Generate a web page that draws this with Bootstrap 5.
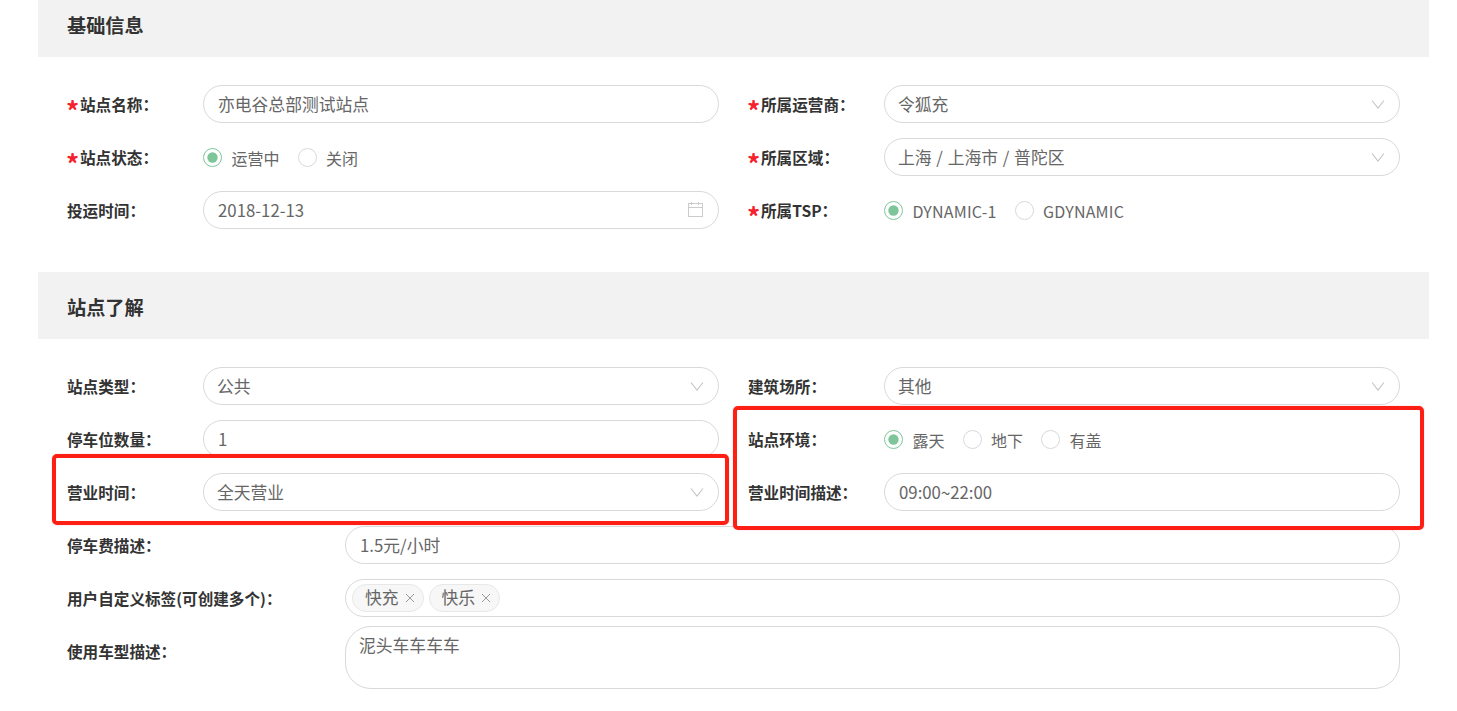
<!DOCTYPE html>
<html lang="zh-CN">
<head>
    <meta charset="UTF-8">
    <meta name="viewport" content="width=device-width, initial-scale=1.0">
    <title>站点信息</title>
    <link href="https://cdn.jsdelivr.net/npm/bootstrap@5.3.3/dist/css/bootstrap.min.css" rel="stylesheet">
    <style>
        html, body { height: 100%; overflow: hidden; }
        body { font-family: "Noto Sans CJK SC", "Liberation Sans", sans-serif; color: #333; background: #fff; }
        .site-page { position: relative; margin: -10px 28px 0 38px; height: 721px; }
        .section-head { height: 67px; line-height: 71px; padding-left: 29px; background: #f2f2f2; font-size: 19.2px; font-weight: 700; color: #333; }
        .section-body { padding: 28px 29px 43px; }
        .section-body.last { padding-bottom: 0; }
        .field-rows { --bs-gutter-x: 29px; --bs-gutter-y: 15px; }
        .field-name { flex: 0 0 136px; width: 136px; margin: 0; padding-top: 2px; font-size: 15.6px; font-weight: 700; color: #333; white-space: nowrap; }
        .field-name.wide { flex-basis: 278px; width: 278px; }
        .field-name .req { display: inline-block; width: 13px; margin-left: -1px; margin-right: 1px; color: #f5222d; font-size: 26px; line-height: 0; vertical-align: -10px; }
        .field-line { min-height: 38px; }
        .form-control, .form-select { height: 38px; padding: 0 14px; border: 1px solid #d9d9d9; border-radius: 19px; font-size: 16.8px; color: #666; }
        .form-select { word-spacing: 1px; background-image: url("data:image/svg+xml,%3csvg xmlns='http://www.w3.org/2000/svg' viewBox='0 0 14 14'%3e%3cpath fill='none' stroke='%23c4c4c4' stroke-width='1.1' d='M1 3.5l6 7.5 6-7.5'/%3e%3c/svg%3e"); background-position: right 14px center; background-size: 14px 14px; padding: 2px 36px 0 13px; }
        .cal-icon { position: absolute; right: 15px; top: 11px; }
        .date-wrap { position: relative; flex: 1 1 auto; }
        .form-check-inline { display: inline-flex; align-items: center; margin: 0 18px 0 0; padding: 0; min-height: 0; }
        .form-check .form-check-input { float: none; width: 19px; height: 19px; margin: 0 9.5px 0 0; border: 1px solid #d9d9d9; }
        .form-check-input:checked[type=radio] { background-color: #fff; border-color: #7ec699; background-image: url("data:image/svg+xml,%3csvg xmlns='http://www.w3.org/2000/svg' viewBox='-9 -9 18 18'%3e%3ccircle r='5.5' fill='%237ec699'/%3e%3c/svg%3e"); }
        .form-check-label { padding-top: 2px; font-size: 16px; color: #666; }
        .latin-option { letter-spacing: .2px; }
        .tag-box { height: 38px; padding: 4px 6px; border: 1px solid #d9d9d9; border-radius: 19px; }
        .tag-row { gap: 5px; }
        .tag-chip { display: inline-flex; align-items: center; gap: 6px; height: 28px; padding: 0 8px 0 12px; border: 1px solid #e8e8e8; border-radius: 14px; background: #f7f7f7; font-size: 16.8px; color: #666; }
        .area-input { height: 63px; padding: 6px 13px; border-radius: 26px; resize: none; }
        .field-rows > .area-row { margin-top: 9px; }
        .area-row .field-name { align-self: flex-start; margin-top: 12px; }
        .red-frame { position: absolute; border: 4px solid #fd1f14; border-radius: 5px; box-shadow: 0 0 1px rgba(253, 31, 20, .6); pointer-events: none; }
        .frame-left { left: 14px; top: 464px; width: 677px; height: 71px; }
        .frame-right { left: 695px; top: 416px; width: 691px; height: 124px; }
    </style>
</head>

<body>
    <div class="site-page">
        <div class="section-head">基础信息</div>
        <div class="section-body">
            <div class="row field-rows">
                <div class="col-6 d-flex align-items-center">
                    <label class="field-name"><span class="req">*</span>站点名称：</label>
                    <input type="text" class="form-control" value="亦电谷总部测试站点">
                </div>
                <div class="col-6 d-flex align-items-center">
                    <label class="field-name"><span class="req">*</span>所属运营商：</label>
                    <select class="form-select"><option>令狐充</option></select>
                </div>
                <div class="col-6 d-flex align-items-center field-line">
                    <label class="field-name"><span class="req">*</span>站点状态：</label>
                    <div class="form-check form-check-inline"><input class="form-check-input" type="radio" name="status" checked><span class="form-check-label">运营中</span></div>
                    <div class="form-check form-check-inline"><input class="form-check-input" type="radio" name="status"><span class="form-check-label">关闭</span></div>
                </div>
                <div class="col-6 d-flex align-items-center">
                    <label class="field-name"><span class="req">*</span>所属区域：</label>
                    <select class="form-select"><option>上海 / 上海市 / 普陀区</option></select>
                </div>
                <div class="col-6 d-flex align-items-center">
                    <label class="field-name">投运时间：</label>
                    <div class="date-wrap">
                        <input type="text" class="form-control" value="2018-12-13">
                        <svg class="cal-icon" width="16" height="16" viewBox="0 0 16 16" fill="none" stroke="#ccc" stroke-width="1"><rect x=".5" y="1.5" width="14" height="13"/><path d="M.5 5.5h14M3.5 0v3M10.5 0v3"/></svg>
                    </div>
                </div>
                <div class="col-6 d-flex align-items-center field-line">
                    <label class="field-name"><span class="req">*</span>所属TSP：</label>
                    <div class="form-check form-check-inline"><input class="form-check-input" type="radio" name="tsp" checked><span class="form-check-label latin-option">DYNAMIC-1</span></div>
                    <div class="form-check form-check-inline"><input class="form-check-input" type="radio" name="tsp"><span class="form-check-label latin-option">GDYNAMIC</span></div>
                </div>
            </div>
        </div>

        <div class="section-head">站点了解</div>
        <div class="section-body last">
            <div class="row field-rows">
                <div class="col-6 d-flex align-items-center">
                    <label class="field-name">站点类型：</label>
                    <select class="form-select"><option>公共</option></select>
                </div>
                <div class="col-6 d-flex align-items-center">
                    <label class="field-name">建筑场所：</label>
                    <select class="form-select"><option>其他</option></select>
                </div>
                <div class="col-6 d-flex align-items-center">
                    <label class="field-name">停车位数量：</label>
                    <input type="text" class="form-control" value="1">
                </div>
                <div class="col-6 d-flex align-items-center field-line">
                    <label class="field-name">站点环境：</label>
                    <div class="form-check form-check-inline"><input class="form-check-input" type="radio" name="env" checked><span class="form-check-label">露天</span></div>
                    <div class="form-check form-check-inline"><input class="form-check-input" type="radio" name="env"><span class="form-check-label">地下</span></div>
                    <div class="form-check form-check-inline"><input class="form-check-input" type="radio" name="env"><span class="form-check-label">有盖</span></div>
                </div>
                <div class="col-6 d-flex align-items-center">
                    <label class="field-name">营业时间：</label>
                    <select class="form-select"><option>全天营业</option></select>
                </div>
                <div class="col-6 d-flex align-items-center">
                    <label class="field-name">营业时间描述：</label>
                    <input type="text" class="form-control" value="09:00~22:00">
                </div>
                <div class="col-12 d-flex align-items-center">
                    <label class="field-name wide">停车费描述：</label>
                    <input type="text" class="form-control" value="1.5元/小时">
                </div>
                <div class="col-12 d-flex align-items-center">
                    <label class="field-name wide">用户自定义标签(可创建多个)：</label>
                    <div class="tag-box flex-grow-1 d-flex tag-row">
                        <span class="tag-chip">快充<svg width="10" height="10" viewBox="0 0 10 10" stroke="#999" stroke-width="1"><path d="M1 1l8 8M9 1l-8 8"/></svg></span>
                        <span class="tag-chip">快乐<svg width="10" height="10" viewBox="0 0 10 10" stroke="#999" stroke-width="1"><path d="M1 1l8 8M9 1l-8 8"/></svg></span>
                    </div>
                </div>
                <div class="col-12 d-flex area-row">
                    <label class="field-name wide">使用车型描述：</label>
                    <textarea class="form-control area-input">泥头车车车车</textarea>
                </div>
            </div>
        </div>

        <div class="red-frame frame-left"></div>
        <div class="red-frame frame-right"></div>
    </div>

    <script src="https://cdn.jsdelivr.net/npm/bootstrap@5.3.3/dist/js/bootstrap.bundle.min.js"></script>
</body>
</html>
